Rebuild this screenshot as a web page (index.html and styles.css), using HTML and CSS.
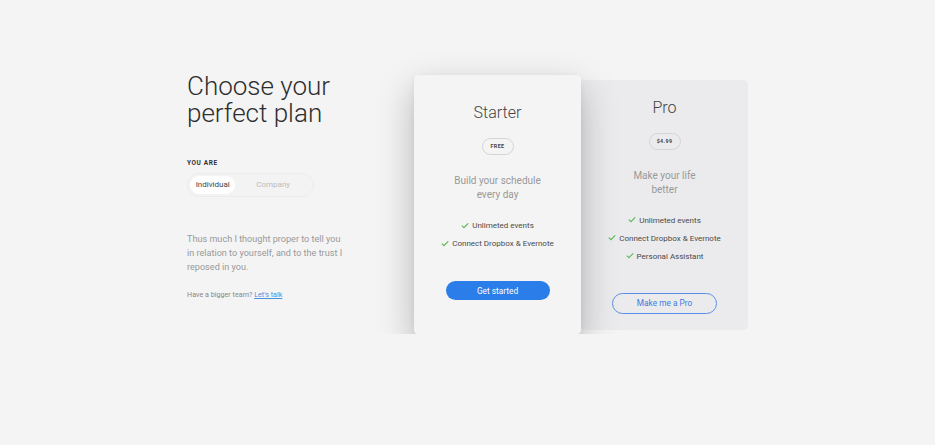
FILE: index.html
```html
<!DOCTYPE html>
<html>
<head>
<meta charset="utf-8">
<link rel="stylesheet" href="styles.css">
</head>
<body>
<div class="page">
  <div class="intro">
    <h1 class="title">Choose your<br>perfect plan</h1>
    <div class="label">YOU ARE</div>
    <div class="toggle">
      <span class="opt opt-active">Individual</span>
      <span class="opt opt-muted">Company</span>
    </div>
    <p class="lead">Thus much I thought proper to tell you in relation to yourself, and to the trust I reposed in you.</p>
    <p class="small">Have a bigger team? <a href="#" class="link">Let's talk</a></p>
  </div>
  <div class="cards">
    <div class="card card-starter">
      <div class="plan">Starter</div>
      <div class="badge">FREE</div>
      <div class="desc">Build your schedule<br>every day</div>
      <ul class="features">
        <li><svg class="check" viewBox="0 0 10 8"><polyline points="1,4.2 3.7,6.8 9,1.2"/></svg>Unlimeted events</li>
        <li><svg class="check" viewBox="0 0 10 8"><polyline points="1,4.2 3.7,6.8 9,1.2"/></svg>Connect Dropbox &amp; Evernote</li>
      </ul>
      <button class="btn btn-primary">Get started</button>
    </div>
    <div class="card card-pro">
      <div class="plan">Pro</div>
      <div class="badge">$4.99</div>
      <div class="desc">Make your life<br>better</div>
      <ul class="features">
        <li><svg class="check" viewBox="0 0 10 8"><polyline points="1,4.2 3.7,6.8 9,1.2"/></svg>Unlimeted events</li>
        <li><svg class="check" viewBox="0 0 10 8"><polyline points="1,4.2 3.7,6.8 9,1.2"/></svg>Connect Dropbox &amp; Evernote</li>
        <li><svg class="check" viewBox="0 0 10 8"><polyline points="1,4.2 3.7,6.8 9,1.2"/></svg>Personal Assistant</li>
      </ul>
      <button class="btn btn-outline">Make me a Pro</button>
    </div>
  </div>
</div>
</body>
</html>
```
FILE: styles.css
```css
html, body {
  margin: 0;
  padding: 0;
  background: #f4f4f4;
  font-family: Roboto, "Liberation Sans", sans-serif;
}
.page {
  width: 561px;
  margin: 0 auto;
  padding-top: 73px;
  display: flex;
  align-items: flex-start;
}
.intro {
  width: 227px;
  flex: none;
}
.title {
  margin: 0;
  font-size: 26px;
  line-height: 27px;
  font-weight: 300;
  color: #2e2e2e;
}
.label {
  margin-top: 32px;
  font-size: 6.5px;
  line-height: 9px;
  font-weight: 700;
  letter-spacing: 0.6px;
  color: #333;
}
.toggle {
  margin-top: 5px;
  width: 121px;
  height: 18px;
  padding: 2px;
  border: 1px solid #ececec;
  border-radius: 12px;
  background: #f3f3f3;
  display: flex;
  align-items: center;
}
.opt {
  font-size: 8px;
  line-height: 18px;
  height: 18px;
  text-align: center;
}
.opt-active {
  width: 48px;
  background: #fff;
  border-radius: 9px;
  color: #444;
}
.opt-muted {
  width: 80px;
  color: #bbb;
}
.lead {
  margin: 35px 0 0;
  width: 156px;
  font-size: 9.1px;
  line-height: 14px;
  color: #999;
}
.small {
  margin: 16px 0 0;
  font-size: 7.2px;
  line-height: 10px;
  color: #888;
}
.link {
  color: #4a90e2;
}
.cards {
  margin-top: 2px;
  display: flex;
  align-items: center;
}
.card {
  display: flex;
  flex-direction: column;
  align-items: center;
  box-sizing: border-box;
}
.card-starter {
  position: relative;
  z-index: 2;
  width: 167px;
  height: 259px;
  padding-top: 28px;
  background: #f4f4f5;
  border-radius: 4px;
  box-shadow: 0 14px 36px rgba(0, 0, 0, 0.26), 0 2px 6px rgba(0, 0, 0, 0.06);
}
.card-pro {
  width: 168px;
  height: 250px;
  padding-top: 18px;
  padding-left: 1px;
  background: #ebebed;
  border-radius: 5px;
  margin-left: -1px;
}
.plan {
  font-size: 16px;
  line-height: 20px;
  font-weight: 300;
  color: #444;
}
.badge {
  margin-top: 15px;
  box-sizing: border-box;
  min-width: 32px;
  height: 17px;
  padding: 0 6px;
  border: 1px solid #d4d4d4;
  border-radius: 9px;
  font-size: 5.3px;
  line-height: 15px;
  font-weight: 700;
  letter-spacing: 0.4px;
  color: #444;
  text-align: center;
}
.desc {
  margin-top: 19px;
  font-size: 10px;
  line-height: 14px;
  color: #999;
  text-align: center;
}
.features {
  margin: 15px 0 0;
  padding: 0;
  list-style: none;
  text-align: center;
}
.features li {
  font-size: 8px;
  line-height: 18px;
  color: #4a4a4a;
}
.check {
  width: 8px;
  height: 7px;
  margin-right: 3px;
  vertical-align: -0.5px;
  fill: none;
  stroke: #5cb85c;
  stroke-width: 1.4;
}
.btn {
  font-family: Roboto, "Liberation Sans", sans-serif;
  font-size: 8.3px;
  cursor: pointer;
  box-sizing: border-box;
}
.btn-primary {
  margin-top: 28px;
  width: 104px;
  height: 19px;
  border: none;
  border-radius: 10px;
  background: #2b7de9;
  color: #fff;
}
.btn-outline {
  margin-top: 27px;
  width: 105px;
  height: 21px;
  border: 1px solid #5b8ee6;
  border-radius: 11px;
  background: transparent;
  color: #3d7be0;
}
```
